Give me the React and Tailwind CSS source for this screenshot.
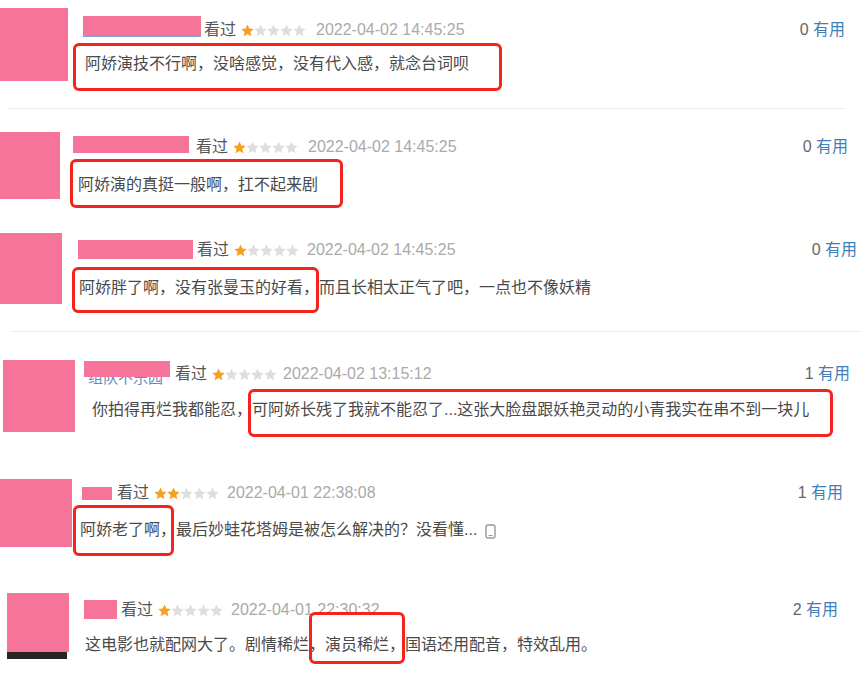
import React from "react"

const FONT = { fontFamily: '"Liberation Sans", "Noto Sans CJK SC", sans-serif' }

function Stars({ filled }) {
  return (
    <span className="flex items-center">
      {[0, 1, 2, 3, 4].map((i) => (
        <svg key={i} width="13" height="13" viewBox="1 1.2 22 21">
          <polygon
            points="12,1.5 15.1,8.3 22.5,9.1 16.9,14.1 18.5,21.5 12,17.7 5.5,21.5 7.1,14.1 1.5,9.1 8.9,8.3"
            fill={i < filled ? "#f4a020" : "#dedede"}
          />
        </svg>
      ))}
    </span>
  )
}

function Useful({ count }) {
  return (
    <span className="ml-auto text-[16px] whitespace-nowrap">
      <span className="text-[#666]">{count}</span> <span className="text-[#3f7fb8]">有用</span>
    </span>
  )
}

function Header({ name, stars, date, count, className, starGap, dateGap, watchGap }) {
  return (
    <div className={`flex h-6 items-center ${className}`}>
      {name}
      <span className={`text-[16px] text-[#555] ${watchGap}`}>看过</span>
      <span className={starGap}>
        <Stars filled={stars} />
      </span>
      <span className={`text-[16px] text-[#aaa] whitespace-nowrap ${dateGap}`}>{date}</span>
      <Useful count={count} />
    </div>
  )
}

function Box({ className }) {
  return <div className={`absolute rounded-[6px] border-[3px] border-[#f3241c] ${className}`}></div>
}

export default function App() {
  return (
    <div className="w-[862px] h-[674px] overflow-hidden bg-white text-[#494949]" style={FONT}>
      {/* row 1 */}
      <div className="relative flex h-[108px]">
        <div className="mt-[8px] w-[68px] h-[73px] bg-[#f6739a] shrink-0"></div>
        <div className="flex-1 ml-[15px] pr-[17px]">
          <Header
            className="mt-[18px]"
            name={<span className="mb-[7px] w-[118px] h-[21px] bg-[#f6739a] border-b border-[#7ba6d4]"></span>}
            watchGap="ml-[3px]"
            starGap="ml-[5px]"
            dateGap="ml-[10px]"
            stars={1}
            date="2022-04-02 14:45:25"
            count={0}
          />
          <div className="mt-[10px] pl-[2px] text-[16px] leading-6">阿娇演技不行啊，没啥感觉，没有代入感，就念台词呗</div>
        </div>
        <Box className="left-[73px] top-[43px] w-[429px] h-[48px]" />
      </div>
      <div className="ml-[8px] w-[837px] h-px bg-[#ececec]"></div>

      {/* row 2 */}
      <div className="relative flex h-[111px]">
        <div className="mt-[23px] w-[60px] h-[67px] bg-[#f6739a] shrink-0"></div>
        <div className="flex-1 ml-[13px] pr-[14px]">
          <Header
            className="mt-[26px]"
            name={<span className="mb-[6px] w-[116px] h-[17px] bg-[#f6739a]"></span>}
            watchGap="ml-[7px]"
            starGap="ml-[5px]"
            dateGap="ml-[10px]"
            stars={1}
            date="2022-04-02 14:45:25"
            count={0}
          />
          <div className="mt-[14px] pl-[5px] text-[16px] leading-6">阿娇演的真挺一般啊，扛不起来剧</div>
        </div>
        <Box className="left-[70px] top-[50px] w-[273px] h-[49px]" />
      </div>

      {/* row 3 */}
      <div className="relative flex h-[111px]">
        <div className="mt-[13px] w-[62px] h-[71px] bg-[#f6739a] shrink-0"></div>
        <div className="flex-1 ml-[16px] pr-[5px]">
          <Header
            className="mt-[18px]"
            name={<span className="mb-[1px] w-[115px] h-[19px] bg-[#f6739a]"></span>}
            watchGap="ml-[4px]"
            starGap="ml-[5px]"
            dateGap="ml-[8px]"
            stars={1}
            date="2022-04-02 14:45:25"
            count={0}
          />
          <div className="mt-[14px] pl-[1px] text-[16px] leading-6">阿娇胖了啊，没有张曼玉的好看，而且长相太正气了吧，一点也不像妖精</div>
        </div>
        <Box className="left-[72px] top-[47px] w-[247px] h-[46px]" />
      </div>
      <div className="ml-[12px] h-px bg-[#ececec]"></div>

      {/* row 4 */}
      <div className="relative flex h-[128px]">
        <div className="ml-[3px] mt-[28px] w-[72px] h-[72px] bg-[#f6739a] shrink-0"></div>
        <div className="flex-1 ml-[9px] pr-[12px]">
          <Header
            className="mt-[30px]"
            name={
              <span className="relative w-[86px] h-6">
                <span className="absolute left-[4px] top-[6px] text-[15px] leading-5 text-[#5a8fc4] whitespace-nowrap">组队不乐园</span>
                <span className="absolute left-0 top-[-1px] w-[86px] h-[16px] bg-[#f6739a]"></span>
              </span>
            }
            watchGap="ml-[5px]"
            starGap="ml-[5px]"
            dateGap="ml-[6px]"
            stars={1}
            date="2022-04-02 13:15:12"
            count={1}
          />
          <div className="mt-[12px] pl-[8px] text-[16px] leading-6">你拍得再烂我都能忍，可阿娇长残了我就不能忍了...这张大脸盘跟妖艳灵动的小青我实在串不到一块儿</div>
        </div>
        <Box className="left-[248px] top-[57px] w-[585px] h-[48px]" />
      </div>

      {/* row 5 */}
      <div className="relative flex h-[115px]">
        <div className="mt-[19px] w-[72px] h-[68px] bg-[#f6739a] shrink-0"></div>
        <div className="flex-1 ml-[8px] pr-[19px]">
          <Header
            className="mt-[21px]"
            name={<span className="ml-[2px] w-[30px] h-[13px] bg-[#f6739a]"></span>}
            watchGap="ml-[5px]"
            starGap="ml-[5px]"
            dateGap="ml-[8px]"
            stars={2}
            date="2022-04-01 22:38:08"
            count={1}
          />
          <div className="mt-[13px] flex items-center text-[16px] leading-6">
            <span>阿娇老了啊，最后妙蛙花塔姆是被怎么解决的？没看懂...</span>
            <svg className="ml-[8px] mt-[3px]" width="11" height="15" viewBox="0 0 11 15">
              <rect x="1" y="1" width="9" height="13" rx="2" fill="none" stroke="#999" strokeWidth="1.4" />
              <line x1="3.5" y1="11.5" x2="7.5" y2="11.5" stroke="#999" strokeWidth="1" />
            </svg>
          </div>
        </div>
        <Box className="left-[73px] top-[45px] w-[101px] h-[51px]" />
      </div>

      {/* row 6 */}
      <div className="relative flex h-[99px]">
        <div className="ml-[7px] mt-[18px] shrink-0">
          <div className="w-[62px] h-[59px] bg-[#f6739a]"></div>
          <div className="w-[60px] h-[7px] bg-[#2b2523]"></div>
        </div>
        <div className="flex-1 ml-[15px] pr-[24px]">
          <Header
            className="mt-[23px]"
            name={<span className="mb-[2px] w-[33px] h-[19px] bg-[#f6739a]"></span>}
            watchGap="ml-[4px]"
            starGap="ml-[5px]"
            dateGap="ml-[8px]"
            stars={1}
            date="2022-04-01 22:30:32"
            count={2}
          />
          <div className="mt-[11px] pl-[1px] text-[16px] leading-6 whitespace-nowrap">这电影也就配网大了。剧情稀烂，演员稀烂，国语还用配音，特效乱用。</div>
        </div>
        <Box className="left-[309px] top-[37px] w-[96px] h-[52px]" />
      </div>
    </div>
  )
}
